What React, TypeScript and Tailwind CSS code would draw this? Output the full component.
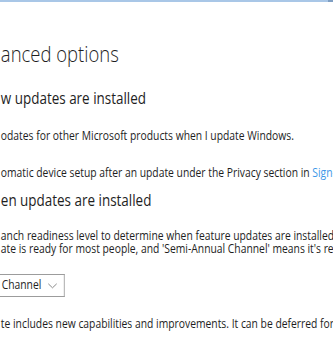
export default function App() {
  return (
    <div className="w-[333px] h-[360px] overflow-hidden bg-white text-[#1e1e1e]" style={{ fontFamily: '"Open Sans", "Noto Sans", sans-serif' }}>
      {/* window frame edge */}
      <div className="flex h-[2px]">
        <div className="flex-1 bg-[#a9c7e7]"></div>
        <div className="w-[5px] bg-[#7f9fc3]"></div>
      </div>

      {/* the capture is a little squeezed sideways */}
      <div className="w-[420px] pl-[1px] origin-top-left scale-x-[0.84]">
        <h1 className="mt-[36px] text-[22px] leading-[30px] font-light whitespace-nowrap">anced options</h1>

        <h2 className="mt-[20px] text-[16px] leading-[20px] whitespace-nowrap">w updates are installed</h2>

        <p className="mt-[21px] text-[12.3px] leading-[13px] whitespace-nowrap">odates for other Microsoft products when I update Windows.</p>

        <p className="mt-[24px] text-[12.3px] leading-[13px] whitespace-nowrap">
          omatic device setup after an update under the Privacy section in <span className="text-[#3d98e8]">Sign-in options</span>
        </p>

        <h2 className="mt-[11px] text-[16px] leading-[20px] whitespace-nowrap">en updates are installed</h2>

        <div className="mt-[19px] text-[12.3px] leading-[13px] whitespace-nowrap">
          <p>anch readiness level to determine when feature updates are installed.</p>
          <p>ate is ready for most people, and 'Semi-Annual Channel' means it's ready for widespread use in organizations.</p>
        </div>

        <div className="mt-[19px] -ml-[1px] flex items-center w-[77px] h-[23px] border border-l-0 border-[#9c9c9c] text-[12.3px]">
          <span className="ml-[2px]">Channel</span>
          <svg className="ml-[8px]" width="11" height="6" viewBox="0 0 11 6">
            <path d="M0.5 0.8 L5.5 4.8 L10.5 0.8" fill="none" stroke="#808080" strokeWidth="1" />
          </svg>
        </div>

        <p className="mt-[20px] text-[12.3px] leading-[13px] whitespace-nowrap">te includes new capabilities and improvements. It can be deferred for this many days:</p>
      </div>
    </div>
  );
}
